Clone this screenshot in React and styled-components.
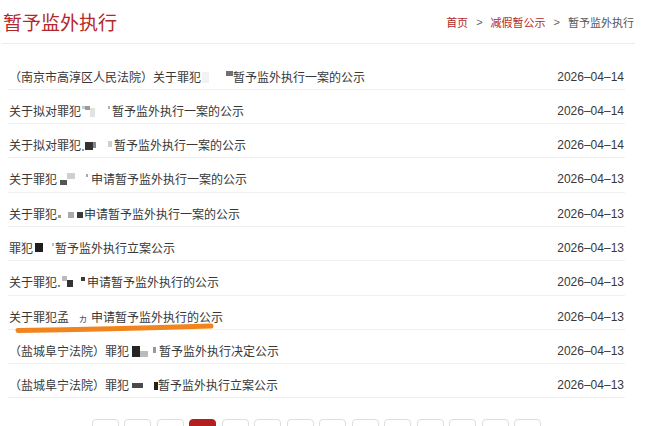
import React from 'react';
import styled, { createGlobalStyle } from 'styled-components';

const GlobalStyle = createGlobalStyle`
    html, body {
        margin: 0;
        padding: 0;
        overflow: hidden;
        background: #fff;
    }
    body {
        font-family: "Noto Sans CJK SC", "Liberation Sans", sans-serif;
        color: #333;
    }
`;

const Page = styled.div`
    width: 633px;
    padding-left: 2px;
`;

const Header = styled.div`
    height: 43px;
    display: flex;
    align-items: center;
    justify-content: space-between;
    border-bottom: 1px solid #ececec;
`;

const Title = styled.h1`
    margin: 0;
    padding-left: 1px;
    font-size: 19px;
    font-weight: 400;
    line-height: 24px;
    color: #b3292b;
`;

const Crumbs = styled.div`
    display: flex;
    align-items: center;
    font-size: 11px;
    line-height: 16px;
    padding-right: 1px;
`;

const Crumb = styled.a`
    color: ${p => (p.$current ? '#555' : '#b3292b')};
    text-decoration: none;
`;

const Sep = styled.span`
    margin: 0 8px;
    color: #666;
    font-family: "Liberation Sans", sans-serif;
`;

const List = styled.ul`
    list-style: none;
    margin: 0 0 0 6px;
    padding: 11.5px 0 0;
    width: 617px;
`;

const Row = styled.li`
    position: relative;
    box-sizing: border-box;
    height: 34.3px;
    padding: 11px 1px 2.3px;
    display: flex;
    justify-content: space-between;
    border-bottom: 1px solid #efefef;
    font-size: 12px;
    line-height: 20px;
`;

const Name = styled.a`
    color: #383838;
    text-decoration: none;
    white-space: nowrap;
`;

const Date = styled.span`
    font-family: "Liberation Sans", sans-serif;
    color: #383838;
`;

// 打码块
const Blot = styled.span`
    display: inline-block;
    width: ${p => p.$w}px;
    height: ${p => p.$h}px;
    margin-left: ${p => p.$ml || 0}px;
    background: ${p => p.$c};
    vertical-align: ${p => p.$y || 0}px;
`;

const Scrawl = styled.span`
    display: inline-block;
    margin-left: ${p => p.$ml}px;
    margin-right: ${p => p.$mr}px;
    font-size: 10px;
    color: #555;
`;

const Mark = styled.svg`
    position: absolute;
    left: 0;
    top: 0;
    overflow: visible;
    pointer-events: none;
`;

const Pager = styled.div`
    display: flex;
    justify-content: center;
    gap: 5.5px;
    margin: 21px 0 0 6px;
    width: 617px;
`;

const PageBtn = styled.span`
    box-sizing: border-box;
    width: 27px;
    height: 28px;
    border: 1px solid ${p => (p.$active ? '#b1201f' : '#dedede')};
    border-radius: 4px;
    background: ${p => (p.$active ? '#b1201f' : '#fff')};
`;

const b = (w, h, c, ml, y) => ({ w, h, c, ml, y });
const gap = (w) => ({ w, h: 1, c: 'transparent' });

const rows = [
    { date: '2026–04–14', parts: ['（南京市高淳区人民法院）关于罪犯', b(7, 11, '#f2f2f2', 1, -1), b(7, 5, '#707070', 17, 6), '暂予监外执行一案的公示'] },
    { date: '2026–04–14', parts: ['关于拟对罪犯', b(3, 3, '#c8c8c8', 1, 7), b(5, 4, '#9a9a9a', 0, 6), b(5, 9, '#e2e2e2', 0, -1), b(2, 3, '#b0b0b0', 13, 7), gap(2), '暂予监外执行一案的公示'] },
    { date: '2026–04–14', parts: ['关于拟对罪犯', b(2, 2, '#999', 1, -1), b(8, 8, '#333', 1, 0), b(3, 6, '#888', 0, 2), b(4, 6, '#cfcfcf', 12, 3), gap(2), '暂予监外执行一案的公示'] },
    { date: '2026–04–13', parts: ['关于罪犯', b(7, 5, '#555', 3, -1), b(8, 6, '#cfcfcf', 0, 5), b(2, 3, '#aaa', 11, 7), gap(3), '申请暂予监外执行一案的公示'] },
    { date: '2026–04–13', parts: ['关于罪犯', b(3, 3, '#999', 1, 1), b(6, 6, '#aaa', 7, 1), b(6, 6, '#3a3a3a', 3, 1), gap(1), '申请暂予监外执行一案的公示'] },
    { date: '2026–04–13', parts: ['罪犯', b(8, 9, '#1e1e1e', 2, 1), b(2, 3, '#bbb', 9, 7), gap(1), '暂予监外执行立案公示'] },
    { date: '2026–04–13', parts: ['关于罪犯', b(2, 2, '#888', 1, 0), b(5, 5, '#bbb', 2, 6), b(6, 7, '#333', 0, 0), b(4, 4, '#3c3c3c', 8, 6), gap(2), '申请暂予监外执行的公示'] },
    { date: '2026–04–13', mark: true, parts: ['关于罪犯孟', 'scrawl', '申请暂予监外执行的公示'] },
    { date: '2026–04–13', parts: ['（盐城阜宁法院）罪犯', b(8, 11, '#252525', 3, -1), b(8, 6, '#bbb', 0, -1), b(3, 6, '#999', 5, 3), gap(3), '暂予监外执行决定公示'] },
    { date: '2026–04–13', parts: ['（盐城阜宁法院）罪犯', b(11, 5, '#4a4a4a', 3, 2), b(4, 8, '#222', 11, 0), '暂予监外执行立案公示'] },
];

const pages = ['首页', '上一页', '3', '4', '5', '6', '7', '8', '9', '10', '11', '12', '下一页', '尾页'];

function renderPart(p, i) {
    if (typeof p === 'string') {
        if (p === 'scrawl') return <Scrawl key={i} $ml={9} $mr={3}>ヵ</Scrawl>;
        return <span key={i}>{p}</span>;
    }
    return <Blot key={i} $w={p.w} $h={p.h} $c={p.c} $ml={p.ml} $y={p.y} />;
}

export default function App() {
    return (
        <>
            <GlobalStyle />
            <Page>
                <Header>
                    <Title>暂予监外执行</Title>
                    <Crumbs>
                        <Crumb href="#">首页</Crumb>
                        <Sep>&gt;</Sep>
                        <Crumb href="#">减假暂公示</Crumb>
                        <Sep>&gt;</Sep>
                        <Crumb $current>暂予监外执行</Crumb>
                    </Crumbs>
                </Header>
                <List>
                    {rows.map((r, idx) => (
                        <Row key={idx}>
                            <Name href="#">{r.parts.map(renderPart)}</Name>
                            <Date>{r.date}</Date>
                            {r.mark && (
                                <Mark width="220" height="38">
                                    <path d="M10 34.5 Q100 33 203 30" stroke="#f2841d" strokeWidth="5" strokeLinecap="round" fill="none" />
                                </Mark>
                            )}
                        </Row>
                    ))}
                </List>
                <Pager>
                    {pages.map((p, i) => (
                        <PageBtn key={i} $active={i === 3} title={p} aria-label={p} />
                    ))}
                </Pager>
            </Page>
        </>
    );
}
